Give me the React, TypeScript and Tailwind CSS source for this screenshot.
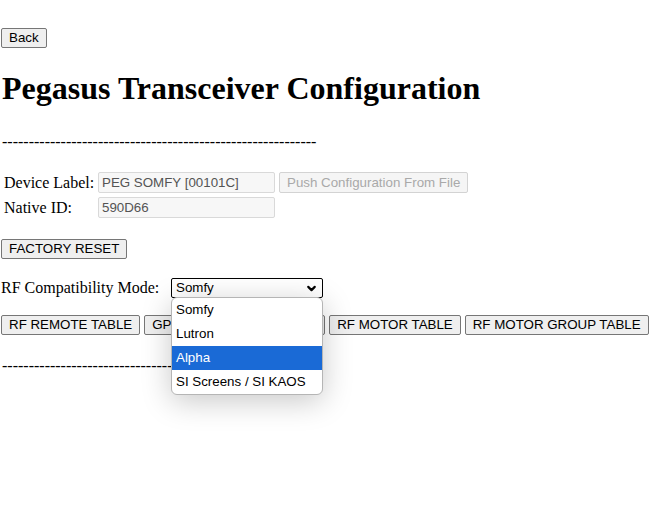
import { ChevronDown } from 'lucide-react';

const btn =
  'h-[20px] px-[7px] bg-[#efefef] border border-[#767676] rounded-[2px] text-[13.33px] leading-none text-black font-["Liberation_Sans",Arial,sans-serif] whitespace-nowrap';

const dashes = '-'.repeat(59);

export default function App() {
  const options = ['Somfy', 'Lutron', 'Alpha', 'SI Screens / SI KAOS'];

  return (
    <div className="w-[668px] h-[515px] bg-white text-black text-[16px] font-['Liberation_Serif','Times_New_Roman',serif] pl-[1px]">
      <div className="pt-[25px]">
        <button className={btn}>Back</button>
      </div>

      <h1 className="mt-[21px] ml-[1px] text-[32px] font-bold leading-[37px]">
        Pegasus Transceiver Configuration
      </h1>

      <div className="mt-[26px] ml-[1px] leading-[18px]">{dashes}</div>

      {/* device info */}
      <div className="mt-[21px] flex flex-col gap-[4px] pl-[3px]">
        <div className="flex items-center h-[21px]">
          <span className="w-[94px]">Device Label:</span>
          <div className="w-[177px] h-[21px] border border-[#d9d9d9] rounded-[2px] bg-[#f7f7f7] px-[3px] flex items-center text-[13.33px] text-[#545454] font-['Liberation_Sans',Arial,sans-serif]">
            PEG SOMFY [00101C]
          </div>
          <button
            disabled
            className="ml-[4px] h-[21px] px-[7px] bg-[#f5f5f5] border border-[#d3d3d3] rounded-[2px] text-[13.33px] text-[#a9a9a9] font-['Liberation_Sans',Arial,sans-serif] whitespace-nowrap"
          >
            Push Configuration From File
          </button>
        </div>
        <div className="flex items-center h-[21px]">
          <span className="w-[94px]">Native ID:</span>
          <div className="w-[177px] h-[21px] border border-[#d9d9d9] rounded-[2px] bg-[#f7f7f7] px-[3px] flex items-center text-[13.33px] text-[#545454] font-['Liberation_Sans',Arial,sans-serif]">
            590D66
          </div>
        </div>
      </div>

      <div className="mt-[18px]">
        <button className={btn}>FACTORY RESET</button>
      </div>

      {/* rf mode */}
      <div className="mt-[18px] flex items-center h-[20px]">
        <span className="w-[170px]">RF Compatibility Mode:</span>
        <div className="relative">
          <div className="w-[152px] h-[20px] border border-[#000] rounded-[2px] flex items-center justify-between pl-[4px] pr-[4px] text-[13.33px] font-['Liberation_Sans',Arial,sans-serif]">
            <span>Somfy</span>
            <ChevronDown className="w-[13px] h-[13px]" strokeWidth={4} />
          </div>
          <div className="absolute left-0 top-[19px] w-[152px] bg-white border border-[#b5b5b5] rounded-[6px] shadow-[0_6px_30px_rgba(0,0,0,0.22)] overflow-hidden z-10">
            {options.map((o) => (
              <div
                key={o}
                className={`h-[24px] flex items-center px-[4px] text-[13.33px] font-['Liberation_Sans',Arial,sans-serif] ${
                  o === 'Alpha' ? 'bg-[#1a6ad6] text-white' : 'text-black'
                }`}
              >
                {o}
              </div>
            ))}
          </div>
        </div>
      </div>

      {/* tables */}
      <div className="mt-[17px] flex gap-[4px]">
        <button className={btn}>RF REMOTE TABLE</button>
        <button className={`${btn} w-[181px] text-left`}>GPIO REMOTE TABLE</button>
        <button className={btn}>RF MOTOR TABLE</button>
        <button className={btn}>RF MOTOR GROUP TABLE</button>
      </div>

      <div className="mt-[22px] ml-[1px] leading-[18px]">{dashes}</div>
    </div>
  );
}
